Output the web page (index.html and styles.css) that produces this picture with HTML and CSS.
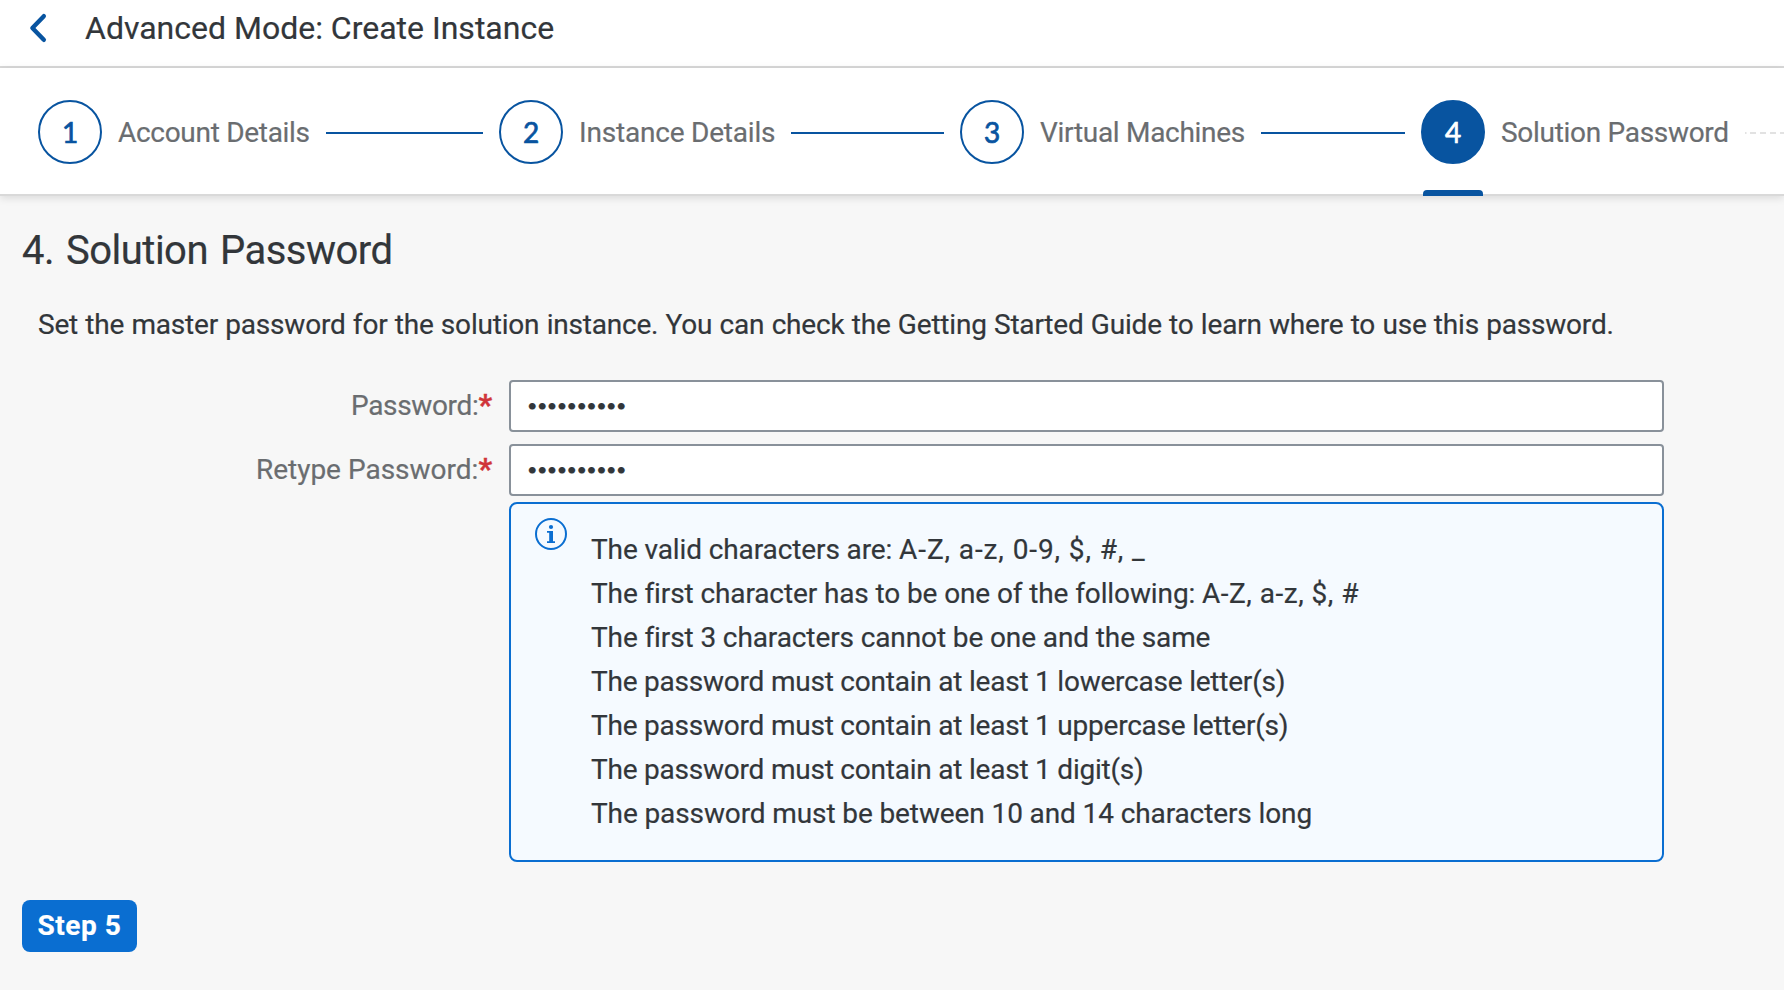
FILE: index.html
```html
<!DOCTYPE html>
<html lang="en">
<head>
<meta charset="utf-8">
<title>Advanced Mode: Create Instance</title>
<link rel="stylesheet" href="styles.css">
</head>
<body>
<header class="header">
  <svg class="back" viewBox="0 0 20 32" aria-label="Back"><path d="M15.8 4.2 4.4 16l11.4 11.8" fill="none" stroke="currentColor" stroke-width="4.4" stroke-linecap="round" stroke-linejoin="round"/></svg>
  <h1 class="title">Advanced Mode: Create Instance</h1>
</header>
<nav class="wizard">
  <div class="step"><span class="circle">1</span><span class="label">Account Details</span><span class="line"></span></div>
  <div class="step"><span class="circle">2</span><span class="label label-loose">Instance Details</span><span class="line"></span></div>
  <div class="step"><span class="circle">3</span><span class="label">Virtual Machines</span><span class="line"></span></div>
  <div class="step step-current"><span class="circle">4</span><span class="label">Solution Password</span><svg class="dashes" viewBox="0 0 40 2" preserveAspectRatio="xMinYMin slice"><path d="M0 1h1.5M5 1h6M15 1h6M25 1h6M35 1h5" stroke="currentColor" stroke-width="2"/></svg></div>
</nav>
<main class="content">
  <h2 class="heading">4. Solution Password</h2>
  <p class="intro">Set the master password for the solution instance. You can check the Getting Started Guide to learn where to use this password.</p>
  <div class="form">
    <div class="field-label">Password:<span class="required">*</span></div>
    <div class="input">••••••••••</div>
    <div class="field-label field-label-long">Retype Password:<span class="required">*</span></div>
    <div class="input">••••••••••</div>
  </div>
  <section class="info">
    <svg class="info-icon" viewBox="0 0 32 32"><circle cx="16" cy="16" r="15" fill="none" stroke="currentColor" stroke-width="2"/><circle cx="16" cy="9" r="2.1" fill="currentColor"/><path d="M12 13h6v10.2h2V25h-8v-1.8h2.2v-8.4H12z" fill="currentColor"/></svg>
    <ul class="rules">
      <li>The valid characters are: <span class="charset charset-full">A-Z, a-z, 0-9, $, #, _</span></li>
      <li>The first character has to be one of the following: <span class="charset">A-Z, a-z, $, #</span></li>
      <li>The first 3 characters cannot be one and the same</li>
      <li class="rule-tight">The password must contain at least 1 lowercase letter(s)</li>
      <li class="rule-tight">The password must contain at least 1 uppercase letter(s)</li>
      <li class="rule-tight">The password must contain at least 1 digit(s)</li>
      <li>The password must be between 10 and 14 characters long</li>
    </ul>
  </section>
  <button class="next">Step 5</button>
</main>
</body>
</html>
```
FILE: styles.css
```css
* { box-sizing: border-box; margin: 0; padding: 0; }

body {
  height: 990px;
  overflow: hidden;
  background: #f7f7f7;
  color: #32363a;
  font: 28px/36px Roboto, "Noto Sans", sans-serif;
  -webkit-text-stroke: .2px currentColor;
}

.header {
  display: flex;
  height: 68px;
  padding-left: 28px;
  background: #fff;
  border-bottom: 2px solid #d9d9d9;
}
.back { width: 20px; height: 32px; margin: 12px 37px 0 0; color: #0854a0; }
.title { font-size: 32px; font-weight: 400; line-height: 56px; }

.wizard {
  display: grid;
  grid-template-columns: repeat(3, 461px) 1fr;
  height: 128px;
  padding: 2px 0 0 38px;
  background: #fff;
  border-bottom: 2px solid #d9d9d9;
  box-shadow: 0 2px 8px rgba(0, 0, 0, .12);
}
.step { position: relative; display: flex; align-items: center; gap: 16px; padding-right: 16px; min-width: 0; }
.circle {
  flex: none;
  width: 64px;
  height: 64px;
  border: 2px solid #0854a0;
  border-radius: 50%;
  color: #0854a0;
  font: 28px/60px Lato, sans-serif;
  text-align: center;
  -webkit-text-stroke: .7px currentColor;
}
.label { flex: none; padding-top: 2px; color: #6a6d70; letter-spacing: -.3px; white-space: nowrap; }
.label-loose { letter-spacing: -.2px; }
.line { flex: 1; height: 2px; margin-top: 2px; background: #0854a0; }
.dashes { flex: 1; min-width: 0; height: 2px; margin-top: 2px; color: #e2e2e2; }
.step-current { padding-right: 0; }
.step-current .circle { background: #0854a0; color: #fff; -webkit-text-stroke-color: #fff; }
.step-current::after {
  content: "";
  position: absolute;
  left: 2px;
  bottom: -2px;
  width: 60px;
  height: 6px;
  border-radius: 4px 4px 0 0;
  background: #0854a0;
}

.content { padding: 31px 0 0 22px; }
.heading { font-size: 40px; font-weight: 400; line-height: 48px; letter-spacing: -.5px; word-spacing: 2.5px; }
.intro { margin: 32px 0 0 16px; letter-spacing: -.2px; word-spacing: .55px; white-space: nowrap; }

.form {
  display: grid;
  grid-template-columns: 470px 1155px;
  gap: 12px 17px;
  margin-top: 37px;
}
.field-label { color: #6a6d70; line-height: 52px; text-align: right; letter-spacing: -.35px; }
.field-label-long { letter-spacing: 0; }
.required { color: #d0343a; font-size: 30px; font-weight: 700; line-height: 0; letter-spacing: 0; -webkit-text-stroke: .4px currentColor; }
.input {
  height: 52px;
  padding-left: 16px;
  background: #fff;
  border: 2px solid #89919a;
  border-radius: 4px;
  font: 18px/46px Lato, sans-serif;
  letter-spacing: -.55px;
}

.info {
  display: flex;
  width: 1155px;
  height: 360px;
  margin: 6px 0 0 487px;
  padding-left: 24px;
  background: #f5faff;
  border: 2px solid #0a6ed1;
  border-radius: 8px;
}
.info-icon { width: 32px; height: 32px; margin: 14px 24px 0 0; color: #0a6ed1; }
.rules { padding-top: 24px; line-height: 44px; letter-spacing: -.11px; list-style: none; }
.rule-tight { letter-spacing: -.22px; }
.charset { letter-spacing: .5px; }
.charset-full { letter-spacing: .9px; }

.next {
  display: block;
  width: 115px;
  height: 52px;
  margin-top: 38px;
  background: #0a6ed1;
  border: 0;
  border-radius: 8px;
  color: #fff;
  font: 700 28px/52px Roboto, sans-serif;
  letter-spacing: .55px;
}
```
